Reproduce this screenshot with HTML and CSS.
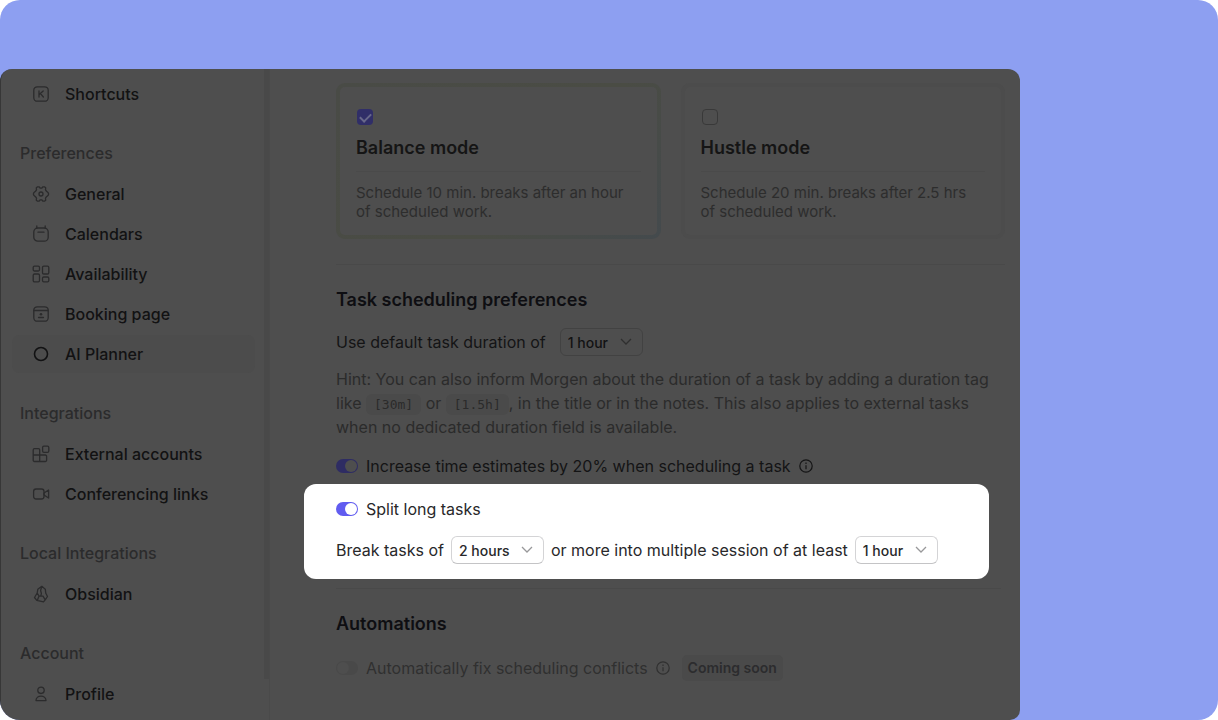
FILE: index.html
```html
<!DOCTYPE html>
<html lang="en">
<head>
    <meta charset="UTF-8">
    <meta name="viewport" content="width=device-width, initial-scale=1.0">
    <title>AI Planner preferences</title>
    <link rel="stylesheet" href="styles.css">
</head>
<body>

    <div class="stage">
        <div class="app">
            <nav class="sidebar">
                <ul class="menu">
                    <li><a href="#">
                        <svg class="icon" viewBox="0 0 16 16"><rect x=".8" y=".8" width="14.4" height="14.4" rx="3.5"/><path d="M6 5v6M10.2 5L6.2 8.6M7.5 7.6L10.4 11"/></svg>
                        Shortcuts</a></li>
                </ul>
                <h3>Preferences</h3>
                <ul class="menu">
                    <li><a href="#">
                        <svg class="icon" viewBox="0 0 16 16"><path d="M4.6 .8H6L7.3 2.2h1.4L10 .8h1.4l1.3 1-.2 2 .8 1.3 1.9 1.6.4 1.3-.4 1.3-1.9 1.6-.8 1.3.2 2-1.3 1H10l-1.3-1.4H7.3L6 15.2H4.6l-1.3-1 .2-2-.8-1.3L.8 9.3.4 8 .8 6.7 2.7 5.1 3.5 3.8 3.3 1.8z"/><circle cx="8" cy="8" r="2"/></svg>
                        General</a></li>
                    <li><a href="#">
                        <svg class="icon" viewBox="0 0 16 16"><rect x=".8" y="2" width="14.4" height="13.2" rx="4"/><path d="M3.8 0v2M12.2 0v2M5 6.2h6"/></svg>
                        Calendars</a></li>
                    <li><a href="#">
                        <svg class="icon" viewBox="0 0 16 16"><rect x=".2" y=".2" width="6.3" height="4.8" rx="1.3"/><rect x="9.5" y=".2" width="6.3" height="7.8" rx="1.3"/><rect x=".2" y="8" width="6.3" height="7.8" rx="1.3"/><rect x="9.5" y="11" width="6.3" height="4.8" rx="1.3"/></svg>
                        Availability</a></li>
                    <li><a href="#">
                        <svg class="icon" viewBox="0 0 16 16"><rect x=".8" y=".8" width="14.4" height="14.4" rx="3.5"/><path d="M1 4.5h14M5.5 11.5h5"/><circle class="dot" cx="8" cy="8.2" r="1.3"/></svg>
                        Booking page</a></li>
                    <li><a href="#" class="active">
                        <svg class="icon" viewBox="0 0 16 16"><circle cx="8" cy="8" r="6.5"/></svg>
                        AI Planner</a></li>
                </ul>
                <h3>Integrations</h3>
                <ul class="menu">
                    <li><a href="#">
                        <svg class="icon" viewBox="0 0 16 16"><path d="M6.7 15.5V3.9a1.2 1.2 0 0 0-1.2-1.2H1.4A1.2 1.2 0 0 0 .2 3.9v10.4a1.2 1.2 0 0 0 1.2 1.2h11a1.2 1.2 0 0 0 1.2-1.2v-4.1a1.2 1.2 0 0 0-1.2-1.2H.2"/><rect x="9.6" y=".2" width="6.2" height="6.2" rx="1.3"/></svg>
                        External accounts</a></li>
                    <li><a href="#">
                        <svg class="icon" viewBox="0 0 16 16"><rect x=".6" y="3" width="10.4" height="10" rx="2.5"/><path d="M11 7l4.6-3v8L11 9z"/></svg>
                        Conferencing links</a></li>
                </ul>
                <h3>Local Integrations</h3>
                <ul class="menu">
                    <li><a href="#">
                        <svg class="icon" viewBox="0 0 16 16"><path d="M8.8 .3L4.8 3.3 4.2 7 1.5 11.5 3.8 14.3 10.5 15.8 12.2 13.8 14.5 10.5 12.8 7.3 12.3 3.2zM8.8 .3L7.6 4.5 8.4 7.5 7.8 9.8M4.2 7L6 10 4.4 14.3M6 10L10 10.2 12.2 13.8"/></svg>
                        Obsidian</a></li>
                </ul>
                <h3>Account</h3>
                <ul class="menu">
                    <li><a href="#">
                        <svg class="icon" viewBox="0 0 16 16"><circle cx="8" cy="4.3" r="3.2"/><path d="M3 14.6c0-6 10-6 10 0z"/></svg>
                        Profile</a></li>
                </ul>
            </nav>

            <main class="content">
                <div class="modes">
                    <section class="mode selected">
                        <input type="checkbox" class="check" id="balance" checked>
                        <h2><label for="balance">Balance mode</label></h2>
                        <p>Schedule 10 min. breaks after an hour of scheduled work.</p>
                    </section>
                    <section class="mode">
                        <input type="checkbox" class="check" id="hustle">
                        <h2><label for="hustle">Hustle mode</label></h2>
                        <p>Schedule 20 min. breaks after 2.5 hrs of scheduled work.</p>
                    </section>
                </div>

                <hr class="first">

                <h2>Task scheduling preferences</h2>
                <div class="row duration">
                    <label for="default-duration">Use default task duration of</label>
                    <span class="dropdown">
                        <select id="default-duration"><option>1 hour</option></select>
                        <svg viewBox="0 0 12 8"><path d="M1 1l5 5 5-5"/></svg>
                    </span>
                </div>
                <p class="hint">Hint: You can also inform Morgen about the duration of a task by adding a duration tag like <code>[30m]</code> or <code>[1.5h]</code>, in the title or in the notes. This also applies to external tasks when no dedicated duration field is available.</p>
                <div class="row toggle-row">
                    <input type="checkbox" class="toggle" id="increase" checked>
                    <label for="increase">Increase time estimates by 20% when scheduling a task</label>
                    <svg class="info" viewBox="0 0 14 14"><circle cx="7" cy="7" r="6.2"/><path d="M7 6.3v4M7 3.5v1.4"/></svg>
                </div>

                <section class="spotlight">
                    <div class="row toggle-row">
                        <input type="checkbox" class="toggle" id="split" checked>
                        <label for="split">Split long tasks</label>
                    </div>
                    <div class="row split-row">
                        <label for="split-over">Break tasks of</label>
                        <span class="dropdown">
                            <select id="split-over"><option>2 hours</option></select>
                            <svg viewBox="0 0 12 8"><path d="M1 1l5 5 5-5"/></svg>
                        </span>
                        <label for="split-min">or more into multiple session of at least</label>
                        <span class="dropdown">
                            <select id="split-min"><option>1 hour</option></select>
                            <svg viewBox="0 0 12 8"><path d="M1 1l5 5 5-5"/></svg>
                        </span>
                    </div>
                </section>

                <hr class="second">

                <h2>Automations</h2>
                <div class="row toggle-row auto">
                    <input type="checkbox" class="toggle" id="autofix" disabled>
                    <label for="autofix">Automatically fix scheduling conflicts</label>
                    <svg class="info" viewBox="0 0 14 14"><circle cx="7" cy="7" r="6.2"/><path d="M7 6.3v4M7 3.5v1.4"/></svg>
                    <span class="badge">Coming soon</span>
                </div>
            </main>
        </div>
    </div>

</body>
</html>
```
FILE: styles.css
```css
* {
    box-sizing: border-box;
}

body {
    margin: 0;
    background: #fff;
    font-family: Inter, "Liberation Sans", sans-serif;
    font-size: 16px;
    line-height: 24px;
    color: #141415;
}

h2, h3, p, ul {
    margin: 0;
    padding: 0;
}

.stage {
    display: flex;
    min-height: 100vh;
    padding: 69px 198px 0 0;
    background: #8d9ff1;
    border-radius: 20px;
    overflow: hidden;
}

.app {
    flex: 1;
    display: flex;
    background: #4e4e4e;
    border-left: 1px solid #373737;
    border-radius: 12px 12px 10px 0;
    overflow: hidden;
}

/* Sidebar */
.sidebar {
    position: relative;
    width: 269px;
    padding: 6px 14px 6px 11px;
    border-right: 1px solid #4a4a4a;
}

/* scrollbar thumb */
.sidebar::after {
    content: "";
    position: absolute;
    top: 0;
    right: 0;
    bottom: 41px;
    width: 5px;
    background: #494949;
}

.sidebar h3 {
    margin: 29px 0 11px 8px;
    font-size: 16px;
    font-weight: 500;
    line-height: 22px;
    color: #2b2b2c;
}

.menu {
    display: flex;
    flex-direction: column;
    gap: 2px;
    list-style: none;
}

.menu a {
    display: flex;
    align-items: center;
    gap: 16px;
    height: 38px;
    padding-left: 21px;
    border-radius: 8px;
    color: #121213;
    font-weight: 500;
    text-decoration: none;
}

.menu a.active {
    background: #4c4c4c;
}

.icon {
    width: 16px;
    height: 16px;
    fill: none;
    stroke: #2b2b2c;
    stroke-width: 1.3;
    stroke-linecap: round;
    stroke-linejoin: round;
    overflow: visible;
}

.icon .dot {
    fill: #2b2b2c;
    stroke: none;
}

.active .icon {
    stroke: #121213;
    stroke-width: 1.6;
}

/* Content */
.content {
    flex: 1;
    padding: 14px 15px 24px 66px;
}

.content h2 {
    font-size: 18px;
    font-weight: 600;
    line-height: 24px;
    color: #0e0e12;
}

.modes {
    display: grid;
    grid-template-columns: 1fr 1fr;
    gap: 20px;
}

.mode {
    padding: 22px 16px 14px;
    border: 4px solid #4c4c4c;
    border-radius: 9px;
}

.mode.selected {
    border-color: transparent;
    background:
        linear-gradient(#4e4e4e, #4e4e4e) padding-box,
        linear-gradient(135deg, #494b46, #4a4c44 60%, #444a4d) border-box;
}

.mode h2 {
    margin-top: 11px;
    padding-bottom: 11px;
    height: 36px;
    border-bottom: 1px solid #4a4a4a;
    color: #151515;
}

.mode p {
    margin-top: 11px;
    padding-right: 8px;
    font-size: 15px;
    line-height: 19px;
    color: #2d2d2d;
}

.check {
    display: block;
    appearance: none;
    width: 16px;
    height: 16px;
    margin: 0 1px;
    border: 1px solid #393939;
    border-radius: 4px;
}

.check:checked {
    border: none;
    background: #302e68;
}

.check:checked::before {
    content: "";
    display: block;
    width: 9px;
    height: 5px;
    margin: 4px auto 0;
    border: solid #68688a;
    border-width: 0 0 2px 2px;
    transform: rotate(-45deg);
}

hr {
    height: 1px;
    border: none;
    background: #494949;
}

.first {
    margin: 25px 0 23px;
}

.second {
    margin: 9px 4px 23px 0;
}

.row {
    display: flex;
    align-items: center;
}

.duration {
    gap: 14px;
    margin-top: 16px;
}

.dropdown {
    position: relative;
    display: flex;
    align-items: center;
}

.dropdown select {
    appearance: none;
    height: 28px;
    padding: 0 33px 0 7px;
    border: 1px solid #424242;
    border-radius: 6px;
    background: transparent;
    color: #121213;
    font-family: inherit;
    font-size: 14px;
    font-weight: 500;
}

.dropdown svg {
    position: absolute;
    right: 11px;
    width: 12px;
    height: 8px;
    fill: none;
    stroke: #2f2f2f;
    stroke-width: 1.3;
    pointer-events: none;
}

.hint {
    margin-top: 11px;
    color: #2b2b2b;
}

code {
    padding: 3px 8px;
    border-radius: 6px;
    background: #4a4a4a;
    font-family: "DejaVu Sans Mono", monospace;
    font-size: 13px;
    line-height: 16px;
}

.toggle-row {
    gap: 8px;
}

.hint + .toggle-row {
    margin-top: 15px;
}

.toggle {
    appearance: none;
    width: 22px;
    height: 14px;
    margin: 0;
    padding: 1px;
    border-radius: 7px;
    background: #494949;
}

.toggle::before {
    content: "";
    display: block;
    width: 12px;
    height: 12px;
    border-radius: 50%;
    background: #4e4e4e;
}

.toggle:checked {
    background: #2e2c63;
}

.toggle:checked::before {
    margin-left: 8px;
}

.info {
    width: 14px;
    height: 14px;
    fill: none;
    stroke: currentColor;
    stroke-width: 1.2;
}

/* Highlighted setting */
.spotlight {
    margin: 6px 16px 0 -32px;
    padding: 13px 32px 15px;
    border-radius: 12px;
    background: #fff;
    color: #28282a;
}

.split-row {
    gap: 7px;
    margin-top: 15px;
}

.spotlight select {
    border-color: #d4d4d6;
    border-bottom-color: #c4c4c6;
    color: #28282a;
}

.spotlight .dropdown svg {
    stroke: #98989a;
}

.spotlight .toggle {
    background: #615cf0;
}

.spotlight .toggle::before {
    background: #fff;
}

.auto {
    margin-top: 19px;
    color: #303030;
}

.badge {
    margin-left: 4px;
    padding: 1px 6px;
    border-radius: 5px;
    background: #4a4a4a;
    font-size: 14px;
    font-weight: 600;
    color: #2c2c2e;
}
```
